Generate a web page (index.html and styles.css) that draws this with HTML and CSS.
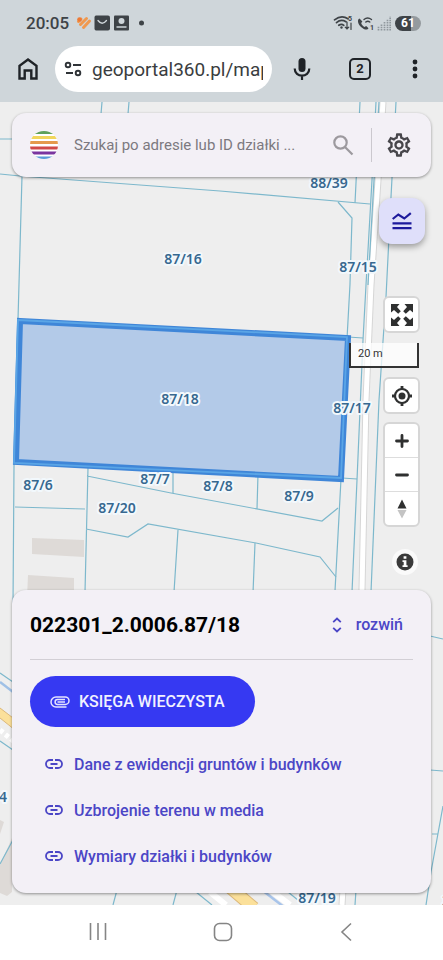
FILE: index.html
```html
<!DOCTYPE html>
<html lang="pl">
<head>
<meta charset="utf-8">
<meta name="viewport" content="width=device-width, initial-scale=1">
<title>geoportal360.pl</title>
<link rel="stylesheet" href="styles.css">
</head>
<body>
<header class="browser">
  <div class="status">
    <span class="status-time">20:05</span>
    <svg class="status-apps" width="74" height="18" viewBox="0 0 74 18" aria-hidden="true">
      <g fill="none" stroke="#f0994f" stroke-width="3" stroke-linecap="round">
        <path d="M2.500 7.500 5 5M4.500 10.500 10.500 4.500M7.500 13.500 13.500 7"/>
      </g>
      <circle cx="3.500" cy="5.500" r="2.300" fill="#ee7a35"/>
      <path d="M20 1.500h12q2 0 2 2v11q0 2-2 2H20q-1.500 0-1.500-2v-11q0-2 1.500-2z" fill="#3e4347"/>
      <path d="M22 6.500q4 5.500 8.500 0" fill="none" stroke="#cfd6da" stroke-width="1.300" stroke-linecap="round"/>
      <rect x="38" y="1.500" width="15" height="15" rx="1" fill="#3e4347"/>
      <circle cx="45.500" cy="7" r="3" fill="#cfd6da"/>
      <path d="M40.500 13h10" stroke="#cfd6da" stroke-width="1.500"/>
      <circle cx="65.500" cy="9" r="2.500" fill="#3e4347"/>
    </svg>
    <svg class="status-signal" width="58" height="18" viewBox="0 0 58 18" aria-hidden="true">
      <g fill="none" stroke="#3e4347" stroke-width="1.700" stroke-linecap="round">
        <path d="M1.500 5.800Q8.500.300 15 4.800M3.500 8.600q4.500-3.800 9.500-.800M5.800 11.300q2.700-2 5 0"/>
        <path d="M14 8v7m-1.800-1.800L14 15l1.800-1.800M18 15.500V9" stroke-width="1.200"/>
        <path d="M31 5.500q3.500-3 7.500 0M32.800 8q2-1.700 4 0" stroke-width="1.400"/>
      </g>
      <circle cx="8.500" cy="13.500" r="1.200" fill="#3e4347"/>
      <path d="M26.500 4.500c-2.500 1-1.800 5.500 1.500 8.500s6.500 3.300 7.500 1.200l-2.300-2.200-1.700 1c-1.500-.8-3-2.500-3.300-4l1.200-1.500z" fill="#3e4347"/>
      <text x="15" y="7" class="tiny">5</text>
      <text x="37" y="16" class="tiny">1</text>
      <path d="M45.500 16.500v-4M48.500 16.500V10M51.500 16.500V7.500M54.500 16.500V5M57.200 16.500V2.500" stroke="#90989d" stroke-width="1.700" stroke-dasharray="1.500 .8"/>
    </svg>
    <span class="battery">61</span>
  </div>
  <div class="toolbar">
    <button class="tool" aria-label="Strona główna">
      <svg width="22" height="24" viewBox="0 0 22 24"><path d="M2.500 21.500V8.800L11 2.500l8.500 6.300v12.700h-5.200v-8H7.700v8z" fill="none" stroke="#1f2327" stroke-width="2.400"/></svg>
    </button>
    <div class="address">
      <svg width="19" height="16" viewBox="0 0 19 16" fill="none" stroke="#2f3337" stroke-width="1.900" aria-hidden="true"><circle cx="4" cy="4" r="2.300"/><path d="M9 4h8M2 12h7"/><circle cx="14" cy="12" r="2.300"/></svg>
      <input type="text" value="geoportal360.pl/map" aria-label="Adres strony" readonly>
    </div>
    <button class="tool mic" aria-label="Wyszukiwanie głosowe">
      <svg width="18" height="24" viewBox="0 0 18 24"><rect x="5.500" y="1" width="7" height="14" rx="3.500" fill="#1f2327"/><path d="M1.700 11.500c0 9.500 14.600 9.500 14.600 0M9 18.500V23" fill="none" stroke="#1f2327" stroke-width="2.200"/></svg>
    </button>
    <button class="tabs" aria-label="Karty">2</button>
    <button class="tool menu" aria-label="Menu">
      <svg width="6" height="20" viewBox="0 0 6 20" fill="#1f2327"><circle cx="3" cy="3" r="2.400"/><circle cx="3" cy="10" r="2.400"/><circle cx="3" cy="17" r="2.400"/></svg>
    </button>
  </div>
</header>

<main class="map">
  <svg class="map-canvas" viewBox="0 102 443 803" preserveAspectRatio="xMinYMin slice" role="img" aria-label="Mapa działek">
    <g fill="#dedad7">
      <path d="M32 538l52 2v17l-52-3zM28 575l46 3v20H27z"/>
      <path d="M0 820l4 2-4 12zM12 838v54l-5 4-7-3v-28z"/>
    </g>
    <path d="M0 718l60 47v-11L0 708z" fill="#fbe09a"/>
    <path d="M0 730l40 33" stroke="#fff" stroke-width="5" stroke-dasharray="4 3"/>
    <path d="M0 708l30 23M0 718l30 24" stroke="#dcb87a" fill="none"/>
    <path d="M0 682l30 23" stroke="#9fc0e6" stroke-width="2.500"/>
    <path d="M225 888l25 20" stroke="#e0d6d0" stroke-width="5"/>
    <path d="M226 884l28 24" stroke="#dcb87a" stroke-width="13"/>
    <path d="M226 884l28 24" stroke="#fbe09a" stroke-width="11"/>
    <path d="M270 890l20 15M210 892l16 13" stroke="#fff" stroke-width="6"/>
    <path d="M258 887l26 20" stroke="#a8c4ea" stroke-width="2.500"/>
    <g fill="none" stroke-linejoin="round">
      <path d="M383 102L378 180 371 285 366 400 362 590 342 905" stroke="#d6d6d6" stroke-width="7"/>
      <path d="M383 102L378 180 371 285 366 400 362 590 342 905" stroke="#fff" stroke-width="5"/>
    </g>
    <g fill="none" stroke="#7db8cc" stroke-width="1.200">
      <path d="M102 102l-1 12M129 102l-1 12M0 139h14M0 174l20 2 200 15 150 13M22 176l-4 144-4 146-1 140v74"/>
      <path d="M360 102l-5 101M338 202l14 16-2 66-3 55-6 140-6 112M376 102l-4 78-6 105-3 55-6 140-5 112M379 102l-5 78-6 105M396 102l-5 95-5 100-7 103-8 192"/>
      <path d="M348 337l15 1M342 478l15 1M15 507l70 2M88 468l-3 124M87 476l84 17 151 28 16-13M173 469v24M258 474l-1 35M86 529l42 8 20-13 108 19 64 14 16 20M178 530l-4 62M255 543l-2 50"/>
      <path d="M0 673l13 9M0 741l13 9M0 864l14-26M117 890l-4 15M177 890l-4 15M196 892l16 13M288 892l16 13M356 890l-1 15M430 636l13 3M430 770l13 1M432 834h6M443 806l-12 66-5 33"/>
    </g>
    <path d="M20 321L348 338 341 479 16 462z" fill="#4a8ade" fill-opacity=".36" stroke="#3f86d8" stroke-width="6"/>
    <path d="M18 320L347 337 341 478 14 463z" fill="none" stroke="#5aa5e6" stroke-width="1.800"/>
    <g class="parcel">
      <text x="329" y="188">88/39</text><text x="183" y="264">87/16</text>
      <text x="358" y="272">87/15</text><text x="180" y="404">87/18</text>
      <text x="352" y="413">87/17</text><text x="38" y="490">87/6</text>
      <text x="155" y="484">87/7</text><text x="218" y="491">87/8</text>
      <text x="299" y="501">87/9</text><text x="117" y="513">87/20</text>
      <text x="317" y="903">87/19</text><text x="3" y="802">4</text>
      <text x="446" y="906">3</text>
    </g>
  </svg>

  <form class="search card">
    <svg class="logo" width="28" height="28" viewBox="0 0 28 28" aria-hidden="true">
      <defs><clipPath id="disc"><circle cx="14" cy="14" r="14"/></clipPath></defs>
      <g clip-path="url(#disc)">
        <path fill="#fff" d="M0 0h28v28H0z"/>
        <path fill="#5fa05a" d="M0 0h28v3H0z"/>
        <path fill="#f1d65c" d="M0 5h28v3H0z"/>
        <path fill="#e59a4c" d="M0 10h28v3H0z"/>
        <path fill="#d04a48" d="M0 15.500h28v3H0z"/>
        <path fill="#7a35a0" d="M0 20.500h28v3H0z"/>
        <path fill="#5b9bd8" d="M0 25.500h28V28H0z"/>
      </g>
    </svg>
    <input type="text" placeholder="Szukaj po adresie lub ID działki ..." aria-label="Szukaj">
    <button type="button" class="plain find" aria-label="Szukaj">
      <svg width="22" height="22" viewBox="0 0 22 22" fill="none" stroke="#9c999e" stroke-width="2.200"><circle cx="8.500" cy="8.500" r="6.200"/><path d="M13 13l7.500 7.500"/></svg>
    </button>
    <button type="button" class="plain settings" aria-label="Ustawienia">
      <svg width="28" height="28" viewBox="0 0 24 24" fill="#47464b"><path d="M19.430 12.980c.04-.32.07-.64.07-.98s-.03-.66-.07-.98l2.110-1.650c.19-.15.24-.42.12-.64l-2-3.460c-.09-.16-.26-.25-.44-.25-.06 0-.12.010-.17.030l-2.490 1c-.52-.4-1.080-.73-1.690-.98l-.38-2.650C14.460 2.180 14.250 2 14 2h-4c-.25 0-.46.18-.49.42l-.38 2.650c-.61.250-1.170.590-1.690.980l-2.490-1c-.06-.02-.12-.03-.18-.03-.17 0-.34.090-.43.250l-2 3.460c-.13.220-.07.490.12.640l2.110 1.650c-.04.320-.07.650-.07.980s.03.660.07.980l-2.110 1.650c-.19.150-.24.420-.12.640l2 3.460c.09.160.26.250.44.250.06 0 .12-.01.17-.03l2.490-1c.52.400 1.080.730 1.690.980l.38 2.650c.03.240.24.420.49.420h4c.25 0 .46-.18.49-.42l.38-2.650c.61-.25 1.170-.59 1.690-.98l2.490 1c.06.020.12.030.18.030.17 0 .34-.09.43-.25l2-3.460c.12-.22.070-.49-.12-.64zm-1.980-1.710c.04.310.05.520.05.730s-.02.430-.05.730l-.14 1.130.89.700 1.080.84-.7 1.210-1.270-.51-1.040-.42-.9.680c-.43.320-.84.560-1.250.730l-1.060.43-.16 1.130-.2 1.350h-1.400l-.19-1.350-.16-1.130-1.060-.43c-.43-.18-.83-.41-1.230-.71l-.91-.7-1.060.43-1.270.510-.7-1.210 1.080-.84.890-.7-.14-1.130c-.03-.31-.05-.54-.05-.74s.02-.43.050-.73l.14-1.130-.89-.7-1.080-.84.700-1.210 1.270.510 1.040.42.900-.68c.43-.32.840-.56 1.250-.73l1.060-.43.160-1.130.2-1.350h1.390l.19 1.350.16 1.130 1.060.43c.43.180.83.410 1.230.71l.91.700 1.060-.43 1.270-.51.700 1.210-1.070.85-.89.700zM12 8c-2.210 0-4 1.790-4 4s1.790 4 4 4 4-1.790 4-4-1.790-4-4-4zm0 6c-1.100 0-2-.9-2-2s.9-2 2-2 2 .9 2 2-.9 2-2 2z"/></svg>
    </button>
  </form>

  <div class="controls">
    <button class="measure" aria-label="Pomiar">
      <svg width="20" height="18" viewBox="0 0 20 18" fill="none" stroke="#1d1a9c" stroke-width="2.200"><path d="M.700 7l5.600-4.500 6 4L18.800 1.200M.500 11.300h19M.500 16.200h19"/></svg>
    </button>
    <button class="box" aria-label="Pełny ekran">
      <svg width="24" height="24" viewBox="0 0 24 24" fill="#2f3030"><path id="arrow" d="M1 1h8.500L7 4l3.800 4.200-2.600 2.600L4 7 1 9.500z"/><use href="#arrow" transform="rotate(90 12 12)"/><use href="#arrow" transform="rotate(180 12 12)"/><use href="#arrow" transform="rotate(270 12 12)"/></svg>
    </button>
    <div class="scale">20 m</div>
    <button class="box" aria-label="Moja lokalizacja">
      <svg width="20" height="20" viewBox="0 0 20 20" fill="none" stroke="#2f3030" stroke-width="2.200"><circle cx="10" cy="10" r="7"/><circle cx="10" cy="10" r="3.500" fill="#2f3030" stroke="none"/><path d="M10 0v3M10 17v3M0 10h3M17 10h3" stroke-width="2.800"/></svg>
    </button>
    <div class="zoom">
      <button aria-label="Przybliż"><svg width="14" height="14" viewBox="0 0 14 14"><path d="M7 1.500v11M1.500 7h11" stroke="#2f3030" stroke-width="2.800" stroke-linecap="round"/></svg></button>
      <button aria-label="Oddal"><svg width="14" height="14" viewBox="0 0 14 14"><path d="M1.500 7h11" stroke="#2f3030" stroke-width="2.800" stroke-linecap="round"/></svg></button>
      <button aria-label="Obróć na północ"><svg width="10" height="20" viewBox="0 0 10 20"><path d="M5 .500L9.500 9.500h-9z" fill="#2f3030"/><path d="M5 19.500L9.500 11h-9z" fill="#c4c4c4"/></svg></button>
    </div>
    <button class="info" aria-label="Informacje">
      <svg width="18" height="18" viewBox="0 0 18 18"><circle cx="9" cy="9" r="8.500" fill="#3a3a3a"/><path d="M7.600 3.200h2.800v2.500H7.600zM6.500 7.200h3.900v5h1.200v1.900H6.500v-1.900h1.200V9.100H6.500z" fill="#fff"/></svg>
    </button>
  </div>

  <section class="panel card">
    <div class="panel-head">
      <h1>022301_2.0006.87/18</h1>
      <button class="plain expand">
        <svg width="10" height="16" viewBox="0 0 10 16" fill="none" stroke="#4b46c6" stroke-width="1.800"><path d="M1.200 5.200L5 1.500l3.800 3.700M1.200 10.800L5 14.500l3.800-3.700"/></svg>
        rozwiń
      </button>
    </div>
    <button class="register">
      <svg width="20" height="12" viewBox="0 0 20 12" fill="none" stroke="#e4e4ff" stroke-width="1.500"><path d="M15 8.400H7.500a2.400 2.400 0 0 1 0-4.800H15M15 6H7.500M15 3.600M16.500 11H6A5 5 0 0 1 6 1h9.300a3.700 3.700 0 0 1 0 7.400H14"/></svg>
      KSIĘGA WIECZYSTA
    </button>
    <nav class="links">
      <a href="#ewidencja"><svg width="18" height="10" viewBox="0 0 18 10"><path d="M8 1H5a4 4 0 0 0 0 8h3M10 1h3a4 4 0 0 1 0 8h-3M5.500 5h7"/></svg>Dane z ewidencji gruntów i budynków</a>
      <a href="#media"><svg width="18" height="10" viewBox="0 0 18 10"><path d="M8 1H5a4 4 0 0 0 0 8h3M10 1h3a4 4 0 0 1 0 8h-3M5.500 5h7"/></svg>Uzbrojenie terenu w media</a>
      <a href="#wymiary"><svg width="18" height="10" viewBox="0 0 18 10"><path d="M8 1H5a4 4 0 0 0 0 8h3M10 1h3a4 4 0 0 1 0 8h-3M5.500 5h7"/></svg>Wymiary działki i budynków</a>
    </nav>
  </section>
</main>

<footer class="system-nav">
  <button class="plain" aria-label="Ostatnie"><svg width="18" height="20" viewBox="0 0 18 20"><path d="M1.500 1v17M9 1v17M16.500 1v17"/></svg></button>
  <button class="plain" aria-label="Ekran główny"><svg width="20" height="20" viewBox="0 0 20 20"><rect x="1.500" y="1.500" width="17" height="17" rx="5"/></svg></button>
  <button class="plain" aria-label="Wstecz"><svg width="16" height="20" viewBox="0 0 16 20"><path d="M12 1.500L3 10l9 8.500"/></svg></button>
</footer>
</body>
</html>
```
FILE: styles.css
```css
* {
  box-sizing: border-box;
}

body {
  margin: 0;
  min-height: 100vh;
  display: flex;
  flex-direction: column;
  font-family: Roboto, "Liberation Sans", sans-serif;
  font-size: 16px;
  color: #000;
  background: #fff;
}

button,
input {
  font: inherit;
  color: inherit;
  margin: 0;
  padding: 0;
  border: 0;
  background: none;
}

svg {
  display: block;
  flex: none;
}

.browser {
  background: #cfd6da;
  padding: 13px 0 10px;
}

.status {
  display: flex;
  align-items: center;
  height: 20px;
  padding: 0 22px 0 26px;
  color: #3e4347;
}

.status-time {
  font-size: 17px;
  font-weight: 500;
  line-height: 20px;
}

.status-apps {
  margin-left: 7px;
}

.status-signal {
  margin-left: auto;
}

.tiny {
  font-size: 7px;
  font-weight: 700;
  fill: #3e4347;
}

.battery {
  margin-left: 4px;
  width: 26px;
  border-radius: 8px;
  background: linear-gradient(90deg, #3e4347 61%, #949a9e 61%);
  color: #fff;
  font-size: 12px;
  font-weight: 700;
  line-height: 15px;
  text-align: center;
}

.toolbar {
  display: flex;
  align-items: center;
  height: 46px;
  margin-top: 13px;
  padding: 0 25px 0 17px;
}

.address {
  flex: 1;
  min-width: 0;
  display: flex;
  align-items: center;
  gap: 9px;
  height: 46px;
  margin-left: 16px;
  padding: 0 9px;
  border-radius: 23px;
  background: #fff;
}

.address input {
  flex: 1;
  min-width: 0;
  height: 30px;
  font-size: 19px;
  color: #3a3d40;
}

.mic {
  margin-left: 21px;
}

.tabs {
  width: 22px;
  height: 22px;
  margin-left: 38px;
  border: 2px solid #1f2327;
  border-radius: 5px;
  font-size: 13px;
  font-weight: 700;
  line-height: 18px;
  text-align: center;
  color: #1f2327;
}

.menu {
  margin-left: 41px;
}

.map {
  position: relative;
  flex: 1;
  display: flex;
  flex-direction: column;
  padding: 11px 12px 12px;
  background: #eee;
  overflow: hidden;
}

.map-canvas {
  position: absolute;
  inset: 0;
  width: 100%;
  height: 100%;
}

.parcel {
  font-family: "Noto Sans", "Open Sans", sans-serif;
  font-size: 14px;
  font-weight: 600;
  text-anchor: middle;
  fill: #376890;
  stroke: #f2f8fc;
  stroke-width: 4px;
  stroke-linejoin: round;
  paint-order: stroke;
}

.card {
  position: relative;
  background: #f3f0f6;
  border-radius: 14px;
  box-shadow: 0 1px 3px rgba(0, 0, 0, 0.4);
}

.search {
  display: flex;
  align-items: center;
  height: 64px;
  padding: 0 18px;
}

.search input {
  flex: 1;
  min-width: 0;
  height: 32px;
  margin-left: 16px;
  font-size: 15px;
}

.search input::placeholder {
  color: #7c797f;
  opacity: 1;
}

.find {
  margin: 0 17px 0 8px;
}

.settings {
  height: 34px;
  padding-left: 13px;
  border-left: 1px solid #cbc8ce;
}

.controls {
  position: relative;
  display: flex;
  flex-direction: column;
  align-items: flex-end;
  padding: 21px 11px 14px;
}

.controls button {
  display: flex;
  align-items: center;
  justify-content: center;
}

.measure {
  width: 46px;
  height: 46px;
  margin-right: -5px;
  border-radius: 13px;
  background: #dfdffa;
  box-shadow: 0 3px 6px rgba(0, 0, 0, 0.35);
}

.box,
.zoom {
  width: 37px;
  border: 2px solid #d6d6d6;
  border-radius: 6px;
  background: #fff;
}

.box {
  height: 37px;
}

.measure + .box {
  margin-top: 52px;
}

.scale {
  width: 70px;
  height: 25px;
  margin: 10px 1px 9px;
  padding-left: 7px;
  border: 2px solid #333;
  border-top: 0;
  background: rgba(255, 255, 255, 0.75);
  font-size: 11px;
  line-height: 22px;
  color: #333;
}

.zoom {
  margin-top: 8px;
}

.zoom button {
  width: 100%;
  height: 33px;
}

.zoom button + button {
  height: 34px;
  border-top: 1px solid #ddd;
}

.info {
  width: 26px;
  height: 26px;
  margin: 22px 2px 0;
  border-radius: 13px;
  background: #fafafa;
}

.panel {
  margin-top: auto;
  padding: 0 18px 14px;
}

.panel-head {
  display: flex;
  align-items: center;
  justify-content: space-between;
  height: 70px;
  padding-right: 10px;
  border-bottom: 1px solid #d2cfd5;
}

.panel-head h1 {
  margin: 0;
  font-size: 21px;
  font-weight: 700;
}

.expand {
  display: flex;
  align-items: center;
  gap: 14px;
  font-weight: 500;
  color: #4b46c6;
}

.register {
  display: flex;
  align-items: center;
  gap: 9px;
  height: 51px;
  margin-top: 16px;
  padding: 0 30px 0 20px;
  border-radius: 26px;
  background: #3639f2;
  color: #f1f1ff;
  font-weight: 500;
}

.links {
  display: flex;
  flex-direction: column;
  margin-top: 14px;
}

.links a {
  display: flex;
  align-items: center;
  gap: 11px;
  height: 46px;
  padding-left: 15px;
  font-weight: 500;
  color: #4b46c6;
  text-decoration: none;
}

.links svg {
  fill: none;
  stroke: #4b46c6;
  stroke-width: 1.8px;
}

.system-nav {
  display: flex;
  align-items: center;
  justify-content: space-between;
  height: 55px;
  padding: 0 88px 2px 89px;
  background: #fff;
}

.system-nav svg {
  fill: none;
  stroke: #858585;
  stroke-width: 1.6px;
}
```
